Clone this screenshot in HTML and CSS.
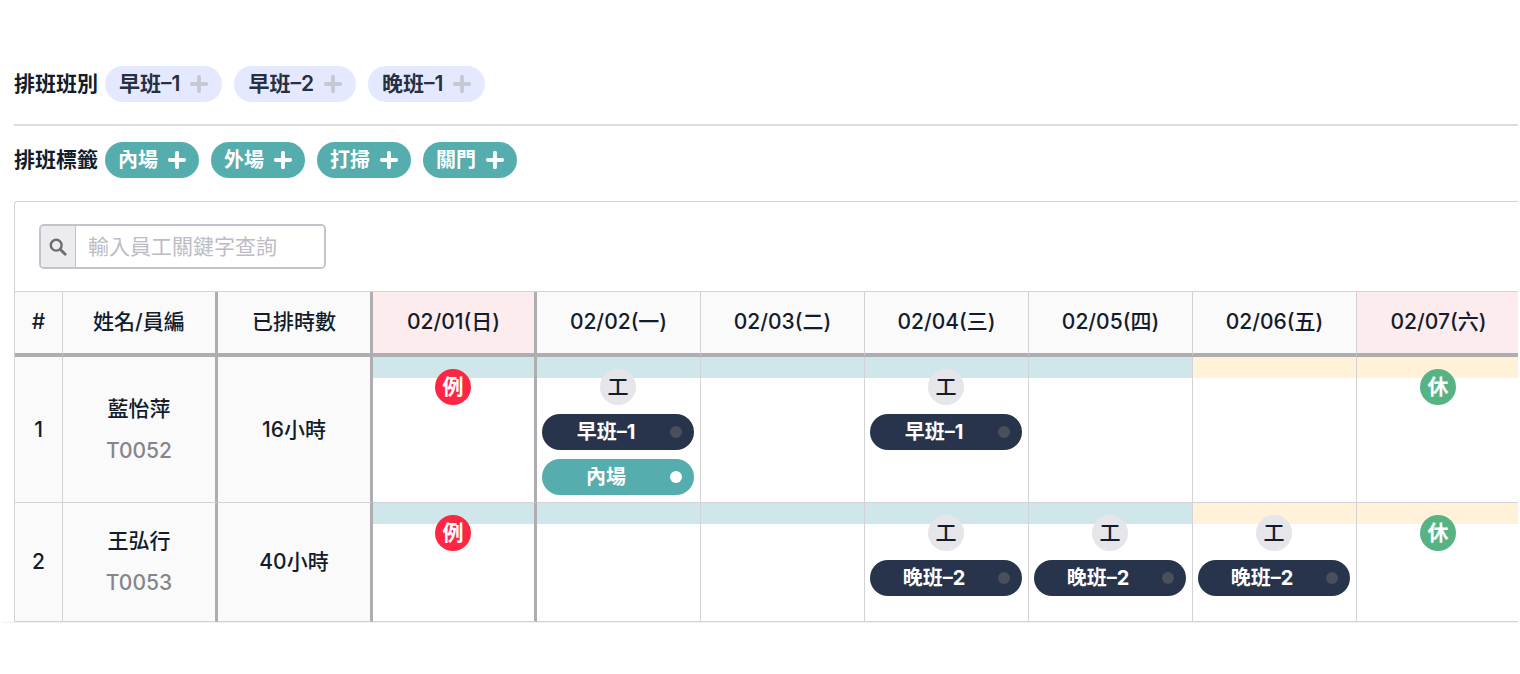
FILE: index.html
```html
<!DOCTYPE html>
<html lang="zh-Hant">
<head>
    <meta charset="UTF-8">
    <meta name="viewport" content="width=device-width, initial-scale=1.0">
    <title>排班表</title>
    <link rel="stylesheet" href="styles.css">
</head>
<body>

<svg class="sprite" aria-hidden="true">
    <symbol id="plus" viewBox="0 0 18 18">
        <path d="M9 1.8v14.4M1.8 9h14.4" fill="none" stroke="currentColor" stroke-width="3.8" stroke-linecap="round"/>
    </symbol>
</svg>

<main class="page">
    <!-- Shifts -->
    <div class="picker">
        <span class="picker-label">排班班別</span>
        <button type="button" class="chip chip-shift">早班–1<svg class="plus"><use href="#plus"/></svg></button>
        <button type="button" class="chip chip-shift">早班–2<svg class="plus"><use href="#plus"/></svg></button>
        <button type="button" class="chip chip-shift">晚班–1<svg class="plus"><use href="#plus"/></svg></button>
    </div>

    <hr class="divider">

    <!-- Tags -->
    <div class="picker">
        <span class="picker-label">排班標籤</span>
        <button type="button" class="chip chip-tag">內場<svg class="plus"><use href="#plus"/></svg></button>
        <button type="button" class="chip chip-tag">外場<svg class="plus"><use href="#plus"/></svg></button>
        <button type="button" class="chip chip-tag">打掃<svg class="plus"><use href="#plus"/></svg></button>
        <button type="button" class="chip chip-tag">關門<svg class="plus"><use href="#plus"/></svg></button>
    </div>

    <!-- Schedule -->
    <div class="card">
        <div class="search">
            <label class="search-icon" for="keyword" aria-label="查詢">
                <svg width="18" height="18" viewBox="0 0 18 18" fill="none" stroke="currentColor" stroke-linecap="round">
                    <circle cx="7.2" cy="7.2" r="5.4" stroke-width="2.4"/>
                    <path d="M11.4 11.4l4.8 4.8" stroke-width="2.8"/>
                </svg>
            </label>
            <input type="text" id="keyword" class="search-input" placeholder="輸入員工關鍵字查詢">
        </div>

        <table class="schedule">
            <colgroup>
                <col class="col-no">
                <col class="col-info">
                <col class="col-info">
                <col span="7">
            </colgroup>
            <thead>
                <tr>
                    <th>#</th>
                    <th class="thick">姓名/員編</th>
                    <th class="thick">已排時數</th>
                    <th class="thick holiday">02/01(日)</th>
                    <th>02/02(一)</th>
                    <th>02/03(二)</th>
                    <th>02/04(三)</th>
                    <th>02/05(四)</th>
                    <th>02/06(五)</th>
                    <th class="holiday">02/07(六)</th>
                </tr>
            </thead>
            <tbody>
                <tr>
                    <td class="info">1</td>
                    <td class="info thick">藍怡萍<span class="staff-id">T0052</span></td>
                    <td class="info thick">16小時</td>
                    <td class="day thick blue"><span class="badge red">例</span></td>
                    <td class="day blue">
                        <span class="badge">工</span>
                        <div class="shift"><span class="shift-name">早班–1</span><span class="dot"></span></div>
                        <div class="shift tag"><span class="shift-name">內場</span><span class="dot"></span></div>
                    </td>
                    <td class="day blue"></td>
                    <td class="day blue">
                        <span class="badge">工</span>
                        <div class="shift"><span class="shift-name">早班–1</span><span class="dot"></span></div>
                    </td>
                    <td class="day blue"></td>
                    <td class="day yellow"></td>
                    <td class="day yellow"><span class="badge green">休</span></td>
                </tr>
                <tr>
                    <td class="info">2</td>
                    <td class="info thick">王弘行<span class="staff-id">T0053</span></td>
                    <td class="info thick">40小時</td>
                    <td class="day thick blue"><span class="badge red">例</span></td>
                    <td class="day blue"></td>
                    <td class="day blue"></td>
                    <td class="day blue">
                        <span class="badge">工</span>
                        <div class="shift"><span class="shift-name">晚班–2</span><span class="dot"></span></div>
                    </td>
                    <td class="day blue">
                        <span class="badge">工</span>
                        <div class="shift"><span class="shift-name">晚班–2</span><span class="dot"></span></div>
                    </td>
                    <td class="day yellow">
                        <span class="badge">工</span>
                        <div class="shift"><span class="shift-name">晚班–2</span><span class="dot"></span></div>
                    </td>
                    <td class="day yellow"><span class="badge green">休</span></td>
                </tr>
            </tbody>
        </table>
    </div>
</main>

</body>
</html>
```

FILE: styles.css
```css
* {
    box-sizing: border-box;
}
body {
    margin: 0;
    background-color: #fff;
    color: #131c2b;
    font-family: Inter, 'Noto Sans CJK TC', sans-serif;
    font-size: 21px;
    font-weight: 500;
}
button, input {
    font-family: inherit;
}
.sprite {
    display: none;
}
.page {
    margin: 0 2px;
    padding: 66px 0 0 12px;
    border-bottom: 1px solid #f1f1f3;
}

/* Shift and tag pickers */
.picker {
    display: flex;
    align-items: center;
    gap: 12px;
}
.picker-label {
    margin-right: -5px;
    font-weight: 600;
    line-height: 36px;
}
.chip {
    display: flex;
    align-items: center;
    gap: 10px;
    height: 36px;
    padding: 0 13px;
    border: 0;
    border-radius: 18px;
    line-height: 36px;
    cursor: pointer;
}
.chip-shift {
    padding: 0 14px;
    background-color: #e5e9ff;
    color: #263040;
    font-size: 21px;
    font-weight: 600;
}
.chip-shift .plus {
    color: #c6c8d4;
}
.chip-tag {
    background-color: #56adad;
    color: #fff;
    font-size: 20px;
    font-weight: 700;
}
.plus {
    width: 18px;
    height: 18px;
}
.divider {
    height: 2px;
    margin: 22px 0 16px;
    border: 0;
    background-color: #dcdcdc;
}

/* Card */
.card {
    margin-top: 23px;
    border: 1px solid #d3d3d6;
    border-width: 1px 0 0 1px;
    border-top-left-radius: 3px;
    overflow: hidden;
}
.search {
    display: flex;
    width: 287px;
    height: 45px;
    margin: 22px 24px;
    border: 2px solid #c3c3cb;
    border-radius: 5px;
    overflow: hidden;
}
.search-icon {
    display: flex;
    align-items: center;
    justify-content: center;
    width: 35px;
    border-right: 1px solid #c3c3cb;
    background-color: #ececee;
    color: #6c6c72;
}
.search-input {
    flex: 1;
    min-width: 0;
    padding: 0 12px;
    border: 0;
    outline: 0;
    font-size: 21px;
    font-weight: 400;
}
.search-input::placeholder {
    color: #bcbcc4;
}

/* Schedule, the last day runs past the card edge */
.schedule {
    width: calc(100% + 3px);
    table-layout: fixed;
    border-collapse: separate;
    border-spacing: 0;
    border-top: 1px solid #d3d3d6;
    text-align: center;
}
.col-no {
    width: 48px;
}
.col-info {
    width: 155px;
}
.schedule th {
    height: 65px;
    padding: 0 0 1px;
    border-right: 1px solid #d3d3d6;
    border-bottom: 4px solid #aeaeb1;
    background-color: #fafafa;
    font-weight: 500;
    line-height: 42px;
}
.schedule th.holiday {
    background-color: #fdecee;
}
.schedule td {
    padding: 0;
    border-right: 1px solid #d3d3d6;
    border-bottom: 1px solid #d3d3d6;
}
.schedule .thick {
    border-right: 3px solid #aeaeb1;
}
.schedule .info {
    padding: 17px 0;
    background-color: #fafafa;
    line-height: 42px;
}
.staff-id {
    display: block;
    color: #85868b;
}
.schedule .day {
    padding: 12px 6px 7px 5px;
    vertical-align: top;
    background-repeat: no-repeat;
    background-size: 100% 21px;
}
.blue {
    background-image: linear-gradient(#cfe6eb, #cfe6eb);
}
.yellow {
    background-image: linear-gradient(#fff2d9, #fff2d9);
}
.badge {
    display: block;
    width: 36px;
    height: 36px;
    margin: 0 auto;
    border-radius: 50%;
    background-color: #e6e6ea;
    font-size: 21px;
    line-height: 36px;
}
.badge.red {
    background-color: #fd2643;
    color: #fff;
    font-weight: 700;
}
.badge.green {
    background-color: #57b384;
    color: #fff;
    font-weight: 700;
}
.shift {
    display: flex;
    align-items: center;
    height: 36px;
    margin-top: 9px;
    padding-right: 12px;
    border-radius: 18px;
    background-color: #27344b;
    color: #fff;
    font-size: 20px;
    font-weight: 700;
    line-height: 36px;
}
.shift-name {
    flex: 1;
}
.dot {
    width: 12px;
    height: 12px;
    border-radius: 50%;
    background-color: #4a4f5c;
}
.shift.tag {
    background-color: #56adad;
}
.shift.tag .dot {
    background-color: #fff;
}
```
